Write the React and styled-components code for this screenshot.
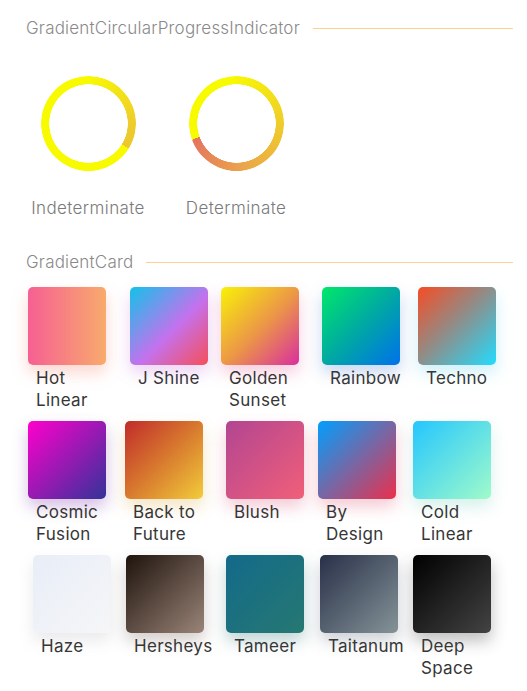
import React from "react";
import styled, { createGlobalStyle } from "styled-components";

const cards = [
  { name: "Hot\nLinear", bg: "linear-gradient(90deg, #f65f93, #f8ab6c)", shadow: "rgba(246, 140, 120, 0.35)", nudge: 0 },
  { name: "J Shine", bg: "linear-gradient(135deg, #12c2e9, #c471ed 55%, #f64f59)", shadow: "rgba(200, 110, 220, 0.3)", nudge: 5 },
  { name: "Golden\nSunset", bg: "linear-gradient(135deg, #f8f207, #ec9a44 50%, #d92f9e)", shadow: "rgba(230, 90, 150, 0.3)", nudge: -1 },
  { name: "Rainbow", bg: "linear-gradient(135deg, #00e86a, #00a9a2 50%, #0071eb)", shadow: "rgba(40, 100, 200, 0.25)", nudge: 3 },
  { name: "Techno", bg: "linear-gradient(135deg, #f64c24, #8a918e 50%, #22dcff)", shadow: "rgba(60, 200, 230, 0.25)", nudge: 2 },
  { name: "Cosmic\nFusion", bg: "linear-gradient(135deg, #ff00cc, #333399)", shadow: "rgba(120, 40, 170, 0.3)", nudge: 0 },
  { name: "Back to\nFuture", bg: "linear-gradient(135deg, #c12b2b, #d87a2e 50%, #f2cc3a)", shadow: "rgba(220, 170, 60, 0.3)", nudge: 0 },
  { name: "Blush", bg: "linear-gradient(135deg, #b24592, #f15f79)", shadow: "rgba(220, 80, 120, 0.3)", nudge: 4 },
  { name: "By\nDesign", bg: "linear-gradient(135deg, #009fff, #ec2f4b)", shadow: "rgba(220, 70, 100, 0.28)", nudge: -1 },
  { name: "Cold\nLinear", bg: "linear-gradient(135deg, #24c6ff, #a0fbca)", shadow: "rgba(120, 210, 190, 0.3)", nudge: -3 },
  { name: "Haze", bg: "linear-gradient(135deg, #e8edf7, #f6f6f8)", shadow: "rgba(150, 150, 160, 0.2)", nudge: 5 },
  { name: "Hersheys", bg: "linear-gradient(135deg, #1e130c, #9a8478)", shadow: "rgba(110, 90, 80, 0.3)", nudge: 1 },
  { name: "Tameer", bg: "linear-gradient(135deg, #136a8a, #267871)", shadow: "rgba(40, 110, 110, 0.3)", nudge: 4 },
  { name: "Taitanum", bg: "linear-gradient(135deg, #283048, #859398)", shadow: "rgba(90, 100, 120, 0.3)", nudge: 1 },
  { name: "Deep\nSpace", bg: "linear-gradient(135deg, #000000, #434343)", shadow: "rgba(40, 40, 40, 0.3)", nudge: -3 },
];

function SectionTitle({ children }) {
  return (
    <TitleRow>
      <TitleText>{children}</TitleText>
      <TitleLine />
    </TitleRow>
  );
}

function GradientCard({ card }) {
  return (
    <CardItem $nudge={card.nudge}>
      <Swatch $bg={card.bg} $shadow={card.shadow} />
      <CardLabel>{card.name}</CardLabel>
    </CardItem>
  );
}

export default function App() {
  return (
    <Page>
      <GlobalStyle />
      <SectionTitle>GradientCircularProgressIndicator</SectionTitle>
      <IndicatorRow>
        <Indicator>
          <Ring $bg="conic-gradient(from 122deg, #f8fb00 0deg, #f8fb00 235deg, #efcd2b 325deg, #ecc72d 360deg)" />
          <IndicatorLabel>Indeterminate</IndicatorLabel>
        </Indicator>
        <Indicator>
          <Ring $bg="conic-gradient(from 250deg, #f8fb00 0deg, #f8fb00 100deg, #efcd2a 200deg, #eba64a 280deg, #e4735f 360deg)" />
          <IndicatorLabel>Determinate</IndicatorLabel>
        </Indicator>
      </IndicatorRow>
      <SectionTitle>GradientCard</SectionTitle>
      <CardGrid>
        {cards.map((card) => (
          <GradientCard key={card.name} card={card} />
        ))}
      </CardGrid>
    </Page>
  );
}

const GlobalStyle = createGlobalStyle`
  body {
    margin: 0;
    background: #ffffff;
    font-family: Inter, "Noto Sans", sans-serif;
  }
`;

const Page = styled.div`
  padding: 18px 14px 0 26px;
`;

const TitleRow = styled.div`
  display: flex;
  align-items: center;
  gap: 13px;
  height: 21px;
`;

const TitleText = styled.span`
  font-size: 17px;
  font-weight: 300;
  line-height: 21px;
  letter-spacing: 0.2px;
  color: #8a8a8a;
`;

const TitleLine = styled.div`
  flex: 1;
  height: 1px;
  background: #fcd08e;
`;

const IndicatorRow = styled.div`
  display: flex;
  gap: 28px;
  padding-left: 2px;
  margin: 37px 0 34px;
`;

const Indicator = styled.div`
  width: 120px;
  display: flex;
  flex-direction: column;
  align-items: center;
  gap: 27px;
`;

const Ring = styled.div`
  width: 95px;
  height: 95px;
  border-radius: 50%;
  background: ${(p) => p.$bg};
  -webkit-mask: radial-gradient(farthest-side, transparent calc(100% - 8.5px), #000 calc(100% - 8px));
  mask: radial-gradient(farthest-side, transparent calc(100% - 8.5px), #000 calc(100% - 8px));
`;

const IndicatorLabel = styled.span`
  font-size: 17px;
  font-weight: 300;
  line-height: 20px;
  letter-spacing: 0.4px;
  color: #7a7a7a;
  white-space: nowrap;
`;

const CardGrid = styled.div`
  display: grid;
  grid-template-columns: repeat(5, 97px);
  row-gap: 10px;
  margin: 14px 0 0 2px;
`;

const CardItem = styled.div`
  display: flex;
  flex-direction: column;
  margin-left: ${(p) => p.$nudge}px;
`;

const Swatch = styled.div`
  width: 78px;
  height: 78px;
  border-radius: 5px;
  background: ${(p) => p.$bg};
  box-shadow: 0 8px 16px ${(p) => p.$shadow};
`;

const CardLabel = styled.div`
  margin: 2px 0 0 8px;
  height: 44px;
  font-size: 17px;
  line-height: 22px;
  letter-spacing: 0.3px;
  color: #363636;
  white-space: pre-line;
`;
